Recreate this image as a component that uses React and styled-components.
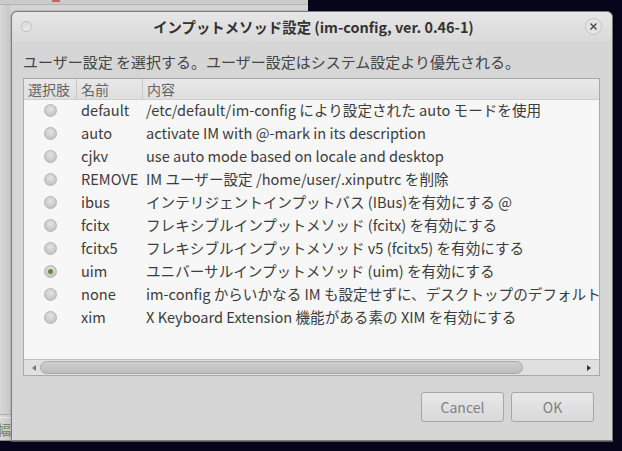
import React from 'react';
import styled, { createGlobalStyle } from 'styled-components';

const GlobalStyle = createGlobalStyle`
  html, body {
    margin: 0;
    padding: 0;
    background: #05051c;
    overflow: hidden;
  }
  body {
    font-family: "Noto Sans CJK JP", "Noto Sans", sans-serif;
    color: #3c3c3c;
  }
`;

const Desktop = styled.div`
  position: relative;
  width: 622px;
  height: 451px;
  background: #05051c;
  overflow: hidden;
`;

// window sitting behind the dialog, only its edges show
const BackWindow = styled.div`
  position: absolute;
  left: 0;
  top: 0;
  width: 308px;
  height: 440px;
  background: linear-gradient(90deg, #d9d9d9 0, #c9c9c9 9px, #d4d4d4 12px);
  border-bottom: 1px solid #8a8a8a;
  .bar {
    height: 4px;
    border-bottom: 1px solid #b4b4b4;
    background: #cbcbcb;
  }
  .mark {
    position: absolute;
    top: 0;
    left: 52px;
    width: 8px;
    height: 2px;
    background: #d06060;
  }
  .line {
    position: absolute;
    left: 0;
    top: 414px;
    width: 12px;
    height: 2px;
    border-top: 1px solid #b0b0b0;
    border-bottom: 1px solid #e8e8e8;
  }
  .glyph {
    position: absolute;
    left: -3px;
    top: 419px;
    font-size: 14px;
    color: #7e7e6a;
  }
`;

const Dialog = styled.div`
  position: absolute;
  left: 11px;
  top: 11px;
  width: 600px;
  height: 428px;
  background: #d6d6d6;
  border: 1px solid #7c7c7c;
  border-radius: 6px 6px 0 0;
  box-shadow: 0 1px 0 #555, 0 0 2px rgba(0, 0, 0, 0.4);
  display: flex;
  flex-direction: column;
`;

const TitleBar = styled.div`
  height: 29px;
  display: flex;
  align-items: center;
  justify-content: space-between;
  padding: 0 10px 0 9px;
  border-radius: 6px 6px 0 0;
  background: linear-gradient(#e6e6e6, #dadada);
`;

const Title = styled.div`
  flex: 1;
  text-align: center;
  font-weight: bold;
  font-size: 14.4px;
  color: #333;
  padding-left: 10px;
  white-space: nowrap;
`;

const Dot = styled.div`
  width: 9px;
  height: 9px;
  border-radius: 50%;
  border: 1px solid #c0c0c0;
  background: linear-gradient(#d8d8d8, #ececec);
`;

const CloseButton = styled.div`
  width: 15px;
  height: 15px;
  border-radius: 50%;
  border: 1px solid #c4c4c4;
  background: #e4e4e4;
  display: flex;
  align-items: center;
  justify-content: center;
  color: #444;
`;

const Body = styled.div`
  flex: 1;
  display: flex;
  flex-direction: column;
  padding: 11px 12px 18px 11px;
`;

const Label = styled.div`
  font-size: 15px;
  line-height: 20px;
  color: #444;
  margin-bottom: 6px;
  white-space: nowrap;
`;

const TableFrame = styled.div`
  height: 296px;
  border: 1px solid #a9a9a9;
  background: #f7f7f7;
  display: flex;
  flex-direction: column;
`;

const Grid = styled.div`
  display: grid;
  grid-template-columns: 53px 66px 1fr;
  overflow: hidden;
`;

const HeadCell = styled.div`
  height: 20px;
  line-height: 20px;
  font-size: 14px;
  color: #666;
  padding-left: ${p => p.$pad}px;
  background: linear-gradient(#e8e8e8, #dedede);
  border-bottom: 1px solid #cfcfcf;
  border-right: ${p => (p.$last ? 'none' : '1px solid #c8c8c8')};
  white-space: nowrap;
`;

const Cell = styled.div`
  height: 23px;
  box-sizing: border-box;
  padding-bottom: 4px;
  display: flex;
  align-items: center;
  justify-content: ${p => (p.$center ? 'center' : 'flex-start')};
  padding-left: ${p => p.$pad || 0}px;
  font-size: 14.6px;
  color: #3c3c3c;
  white-space: nowrap;
`;

const Radio = styled.div`
  width: 11px;
  height: 11px;
  margin-top: 2px;
  border-radius: 50%;
  border: 1px solid #b4b4b4;
  background: radial-gradient(circle at 50% 35%, #e4e4e4 0, #c6c6c6 70%);
  display: flex;
  align-items: center;
  justify-content: center;
  &::after {
    content: '';
    display: ${p => (p.$checked ? 'block' : 'none')};
    width: 5px;
    height: 5px;
    border-radius: 50%;
    background: #5f8a3c;
  }
`;

const Filler = styled.div`
  flex: 1;
`;

const Scrollbar = styled.div`
  height: 15px;
  display: flex;
  align-items: center;
  border-top: 1px solid #c0c0c0;
  background: #e0e0e0;
  padding: 0 4px;
`;

const Arrow = styled.div`
  width: 0;
  height: 0;
  border-top: 3px solid transparent;
  border-bottom: 3px solid transparent;
  ${p => (p.$right ? 'border-left: 4px solid #333;' : 'border-right: 4px solid #777;')}
  margin: ${p => (p.$right ? '0 4px 0 0' : '0 0 0 4px')};
`;

const Trough = styled.div`
  flex: 1;
  height: 15px;
  display: flex;
  align-items: center;
  padding: 0 4px;
`;

const Thumb = styled.div`
  width: 483px;
  height: 13px;
  border-radius: 7px;
  border: 1px solid #a9a9a9;
  box-sizing: border-box;
  background: linear-gradient(#cfcfcf, #bdbdbd);
`;

const Buttons = styled.div`
  margin-top: 16px;
  display: flex;
  justify-content: flex-end;
  gap: 7px;
  padding-right: 6px;
`;

const Button = styled.div`
  width: 81px;
  height: 28px;
  border: 1px solid #a6a6a6;
  border-radius: 3px;
  background: linear-gradient(#e8e8e8, #d9d9d9);
  display: flex;
  align-items: center;
  justify-content: center;
  font-size: 14px;
  color: #808080;
`;

const rows = [
  ['default', '/etc/default/im-config により設定された auto モードを使用'],
  ['auto', 'activate IM with @-mark in its description'],
  ['cjkv', 'use auto mode based on locale and desktop'],
  ['REMOVE', 'IM ユーザー設定 /home/user/.xinputrc を削除'],
  ['ibus', 'インテリジェントインプットバス (IBus)を有効にする @'],
  ['fcitx', 'フレキシブルインプットメソッド (fcitx) を有効にする'],
  ['fcitx5', 'フレキシブルインプットメソッド v5 (fcitx5) を有効にする'],
  ['uim', 'ユニバーサルインプットメソッド (uim) を有効にする', true],
  ['none', 'im-config からいかなる IM も設定せずに、デスクトップのデフォルトを使用'],
  ['xim', 'X Keyboard Extension 機能がある素の XIM を有効にする'],
];

export default function App() {
  return (
    <Desktop>
      <GlobalStyle />
      <BackWindow>
        <div className="bar" />
        <div className="mark" />
        <div className="line" />
        <div className="glyph">幅</div>
      </BackWindow>
      <Dialog>
        <TitleBar>
          <Dot />
          <Title>インプットメソッド設定 (im-config, ver. 0.46-1)</Title>
          <CloseButton>
            <svg width="7" height="7" viewBox="0 0 7 7">
              <path d="M0.5 0.5 L6.5 6.5 M6.5 0.5 L0.5 6.5" stroke="#444" strokeWidth="1.4" />
            </svg>
          </CloseButton>
        </TitleBar>
        <Body>
          <Label>ユーザー設定 を選択する。ユーザー設定はシステム設定より優先される。</Label>
          <TableFrame>
            <Grid>
              <HeadCell $pad={4}>選択肢</HeadCell>
              <HeadCell $pad={4}>名前</HeadCell>
              <HeadCell $pad={4} $last>内容</HeadCell>
              {rows.map(([name, desc, checked]) => (
                <React.Fragment key={name}>
                  <Cell $center><Radio $checked={checked} /></Cell>
                  <Cell $pad={4}>{name}</Cell>
                  <Cell $pad={3}>{desc}</Cell>
                </React.Fragment>
              ))}
            </Grid>
            <Filler />
            <Scrollbar>
              <Arrow />
              <Trough><Thumb /></Trough>
              <Arrow $right />
            </Scrollbar>
          </TableFrame>
          <Buttons>
            <Button>Cancel</Button>
            <Button>OK</Button>
          </Buttons>
        </Body>
      </Dialog>
    </Desktop>
  );
}
